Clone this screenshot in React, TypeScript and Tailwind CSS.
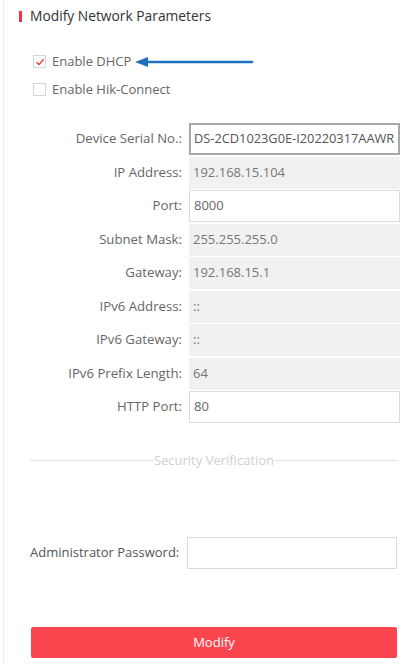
import React from 'react';

const rows: { label: string; value: string; kind: 'dark' | 'light' | 'gray' }[] = [
  { label: 'Device Serial No.:', value: 'DS-2CD1023G0E-I20220317AAWR', kind: 'dark' },
  { label: 'IP Address:', value: '192.168.15.104', kind: 'gray' },
  { label: 'Port:', value: '8000', kind: 'light' },
  { label: 'Subnet Mask:', value: '255.255.255.0', kind: 'gray' },
  { label: 'Gateway:', value: '192.168.15.1', kind: 'gray' },
  { label: 'IPv6 Address:', value: '::', kind: 'gray' },
  { label: 'IPv6 Gateway:', value: '::', kind: 'gray' },
  { label: 'IPv6 Prefix Length:', value: '64', kind: 'gray' },
  { label: 'HTTP Port:', value: '80', kind: 'light' },
];

function Checkbox({ checked }: { checked?: boolean }) {
  return (
    <span className="w-[13px] h-[13px] border border-[#d6d6d6] bg-white flex items-center justify-center">
      {checked && (
        <svg width="10" height="10" viewBox="0 0 10 10">
          <path d="M1.5 5.2 L4 7.6 L8.6 2.2" fill="none" stroke="#e8343f" strokeWidth="1.4" />
        </svg>
      )}
    </span>
  );
}

export default function App() {
  return (
    <div
      className="w-[419px] h-[664px] bg-white pl-[3px] overflow-hidden"
      style={{ fontFamily: '"Open Sans", "Noto Sans", sans-serif' }}
    >
      <div className="h-full border-l border-[#ececec]">
        <div className="flex items-center pt-[6px] pl-[15px] h-[20px] box-content">
          <span className="w-[3px] h-[11px] bg-[#f2323e]" />
          <span className="ml-[8px] text-[13.8px] text-[#333] leading-none">Modify Network Parameters</span>
        </div>

        <div className="mt-[29px] pl-[29px] flex flex-col gap-[15px]">
          <div className="flex items-center h-[13px]">
            <Checkbox checked />
            <span className="ml-[6px] text-[13px] text-[#666]">Enable DHCP</span>
            <svg width="120" height="12" viewBox="0 0 120 12" className="ml-[3px]">
              <path d="M12 6 H118" stroke="#1f6fbf" strokeWidth="2.6" strokeLinecap="round" />
              <path d="M1 6 L14 1 L14 11 Z" fill="#1f6fbf" />
            </svg>
          </div>
          <div className="flex items-center h-[13px]">
            <Checkbox />
            <span className="ml-[6px] text-[13px] text-[#666]">Enable Hik-Connect</span>
          </div>
        </div>

        <div className="mt-[27px] grid grid-cols-[178px_211px] gap-x-[7px] gap-y-[1.5px]">
          {rows.map((r) => (
            <React.Fragment key={r.label}>
              <div className="h-[32px] flex items-center justify-end text-[13.2px] text-[#666]">
                {r.label}
              </div>
              <div
                className={
                  r.kind === 'dark'
                    ? 'h-[32px] flex items-center px-[3px] border-2 border-[#a8a8a8] bg-white text-[12.8px] text-[#555] whitespace-nowrap overflow-hidden'
                    : r.kind === 'light'
                    ? 'h-[32px] flex items-center px-[4px] border border-[#dcdcdc] bg-white text-[13px] text-[#666]'
                    : 'h-[32px] flex items-center px-[4px] bg-[#f1f1f1] text-[13px] text-[#777]'
                }
              >
                {r.value}
              </div>
            </React.Fragment>
          ))}
        </div>

        <div className="mt-[31px] ml-[26px] w-[368px] flex items-center">
          <span className="flex-1 h-px bg-[#e3e3e3]" />
          <span className="text-[13px] text-[#cfcfcf] leading-none">Security Verification</span>
          <span className="flex-1 h-px bg-[#e3e3e3]" />
        </div>

        <div className="mt-[70px] ml-[26px] flex items-center">
          <span className="w-[157px] text-[13px] text-[#555]">Administrator Password:</span>
          <span className="w-[210px] h-[32px] border border-[#dcdcdc] bg-white" />
        </div>

        <div className="mt-[58px] ml-[27px] w-[366px] h-[31px] bg-[#fa444e] rounded-[2px] flex items-center justify-center text-[13px] text-white">
          Modify
        </div>
      </div>
    </div>
  );
}
